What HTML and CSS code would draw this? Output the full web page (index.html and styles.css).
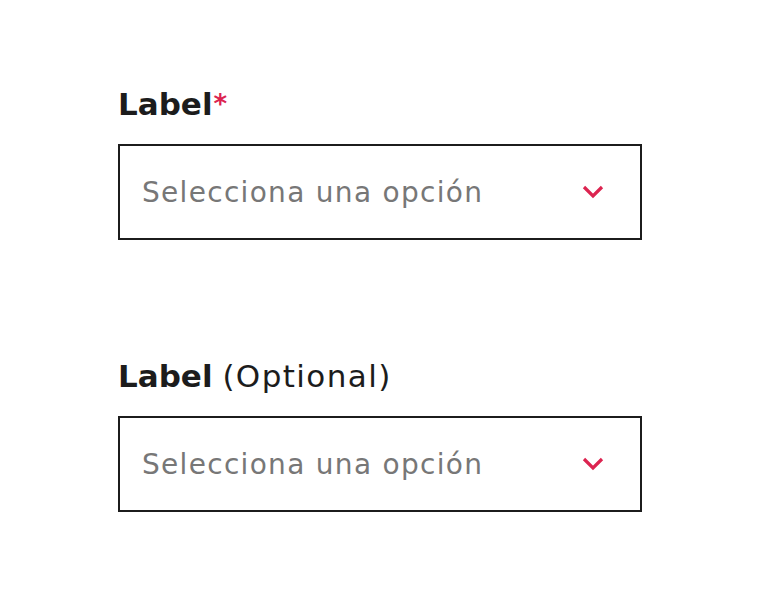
FILE: index.html
```html
<!DOCTYPE html>
<html lang="es">
<head>
<meta charset="utf-8">
<link rel="stylesheet" href="styles.css">
</head>
<body>
<main class="form">
  <div class="field">
    <label class="label"><span class="label-strong">Label</span><span class="req">*</span></label>
    <div class="select">
      <span class="placeholder">Selecciona una opción</span>
      <svg class="chevron" width="22" height="14" viewBox="0 0 22 14"><path d="M2 2 L11 11 L20 2" fill="none" stroke="#dc2450" stroke-width="3.2"/></svg>
    </div>
  </div>
  <div class="field">
    <label class="label"><span class="label-strong">Label</span> <span class="opt">(Optional)</span></label>
    <div class="select">
      <span class="placeholder">Selecciona una opción</span>
      <svg class="chevron" width="22" height="14" viewBox="0 0 22 14"><path d="M2 2 L11 11 L20 2" fill="none" stroke="#dc2450" stroke-width="3.2"/></svg>
    </div>
  </div>
</main>
</body>
</html>
```
FILE: styles.css
```css
html, body { margin: 0; padding: 0; background: #fff; }
body { font-family: "DejaVu Sans", "Liberation Sans", sans-serif; color: #1c1c1c; }
.form { display: flex; flex-direction: column; gap: 116px; padding: 84px 0 0 118px; width: 524px; }
.field { display: flex; flex-direction: column; gap: 20px; }
.label { font-size: 31px; line-height: 40px; letter-spacing: 0; }
.label-strong { font-weight: 700; }
.req { color: #dc2450; font-weight: 700; font-size: 26px; vertical-align: 2px; margin-left: 1px; }
.opt { font-weight: 400; letter-spacing: 1.4px; }
.select { box-sizing: border-box; height: 96px; border: 2px solid #1c1c1c; display: flex; align-items: center; justify-content: space-between; padding: 0 36px 0 22px; }
.placeholder { font-size: 28px; color: #777; letter-spacing: 1.3px; }
.chevron { display: block; }
```
